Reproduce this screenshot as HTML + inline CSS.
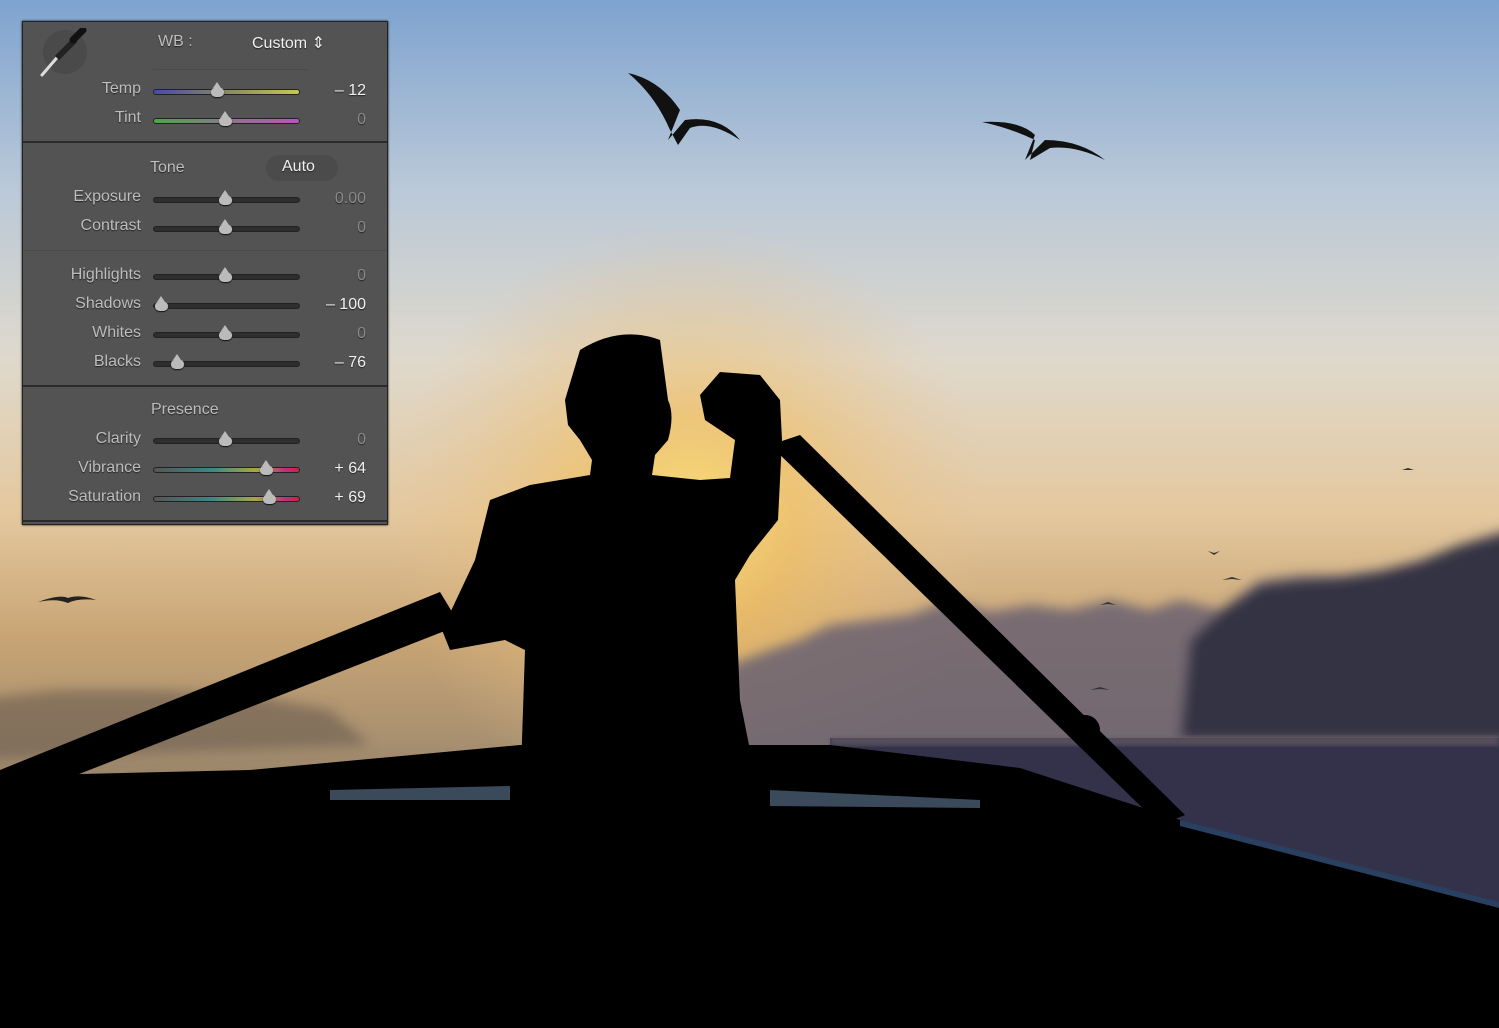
<!DOCTYPE html>
<html><head><meta charset="utf-8"><style>
body{margin:0;width:1499px;height:1028px;overflow:hidden;position:relative;font-family:"Liberation Sans",sans-serif;background:#000}
svg.bg{position:absolute;left:0;top:0}
.panel{position:absolute;left:22px;top:21px;width:364px;height:502px;background:#535353;border:1px solid #222;box-shadow:0 0 2px #000}
.t{position:absolute;color:#bdbdbd;font-size:16px;text-shadow:0 1px 1px #222}
.l{right:246px;text-align:right}
.v{right:21px;text-align:right}
.w{color:#f0f0f0}
.d{color:#8a8a8a}
.trk{position:absolute;left:130px;width:145px;height:4px;border-radius:3px;border:1px solid #222;background:#6a6a6a}
.th{position:absolute;width:13px;height:10px;background:#bbb;border-radius:50% 50% 40% 40%;box-shadow:0 1px 1px #111}
.th:before{content:"";position:absolute;left:2px;top:-5px;border-left:4.5px solid transparent;border-right:4.5px solid transparent;border-bottom:6px solid #bbb}
.sep{position:absolute;left:0;width:364px;height:2px;background:#2a2a2a}
.sep2{position:absolute;left:0;width:364px;height:1px;background:#4a4a4a}
</style></head><body>
<svg class="bg" width="1499" height="1028" viewBox="0 0 1499 1028">
<defs>
<linearGradient id="sky" x1="0" y1="0" x2="0" y2="1">
<stop offset="0" stop-color="#7ea3cf"/><stop offset="0.18" stop-color="#b9c8d8"/><stop offset="0.35" stop-color="#dfd9cc"/><stop offset="0.5" stop-color="#e4c89e"/><stop offset="0.62" stop-color="#c8a474"/><stop offset="0.72" stop-color="#a89070"/><stop offset="1" stop-color="#403a40"/>
</linearGradient>
<radialGradient id="sun" cx="690" cy="520" r="300" gradientUnits="userSpaceOnUse">
<stop offset="0" stop-color="#fbe07a" stop-opacity="1"/><stop offset="0.35" stop-color="#f2c060" stop-opacity=".7"/><stop offset="1" stop-color="#e8c090" stop-opacity="0"/>
</radialGradient>
<filter id="bl" filterUnits="userSpaceOnUse" x="-50" y="0" width="1600" height="1028"><feGaussianBlur stdDeviation="6"/></filter>
<filter id="bl2"><feGaussianBlur stdDeviation="2"/></filter>
</defs>
<rect width="1499" height="1028" fill="url(#sky)"/>
<rect width="1499" height="1028" fill="url(#sun)"/>
<g filter="url(#bl)">
<path d="M730 665 L770 650 L800 640 L830 625 L870 620 L910 615 L950 600 L990 612 L1030 605 L1070 610 L1110 600 L1150 610 L1180 600 L1220 610 L1260 580 L1300 575 L1340 575 L1380 570 L1420 560 L1460 545 L1520 525 L1520 760 L730 760Z" fill="#6a6072" opacity=".85"/>
<path d="M1190 640 L1220 612 L1260 585 L1300 580 L1340 578 L1380 572 L1420 562 L1460 545 L1520 530 L1520 740 L1180 740Z" fill="#2e2c40" opacity=".9"/>
<path d="M-30 700 L60 690 L150 690 L250 695 L330 710 L370 745 L-30 760Z" fill="#6a5a50" opacity=".6"/>
</g>
<rect x="830" y="738" width="669" height="170" fill="#33324a"/>
<rect x="830" y="736" width="669" height="10" fill="#6a6068" opacity=".6" filter="url(#bl2)"/>
<path d="M0 790 L40 775 L250 770 L520 745 L830 745 L1020 768 L1180 820 L1499 905 L1499 1028 L0 1028Z" fill="#000"/>
<path d="M1180 820 L1499 902 L1499 908 L1180 826Z" fill="#2a4060"/>
<path d="M330 790 L510 786 L510 800 L330 800Z M770 790 L980 800 L980 808 L770 806Z" fill="#3a4a5a"/>
<path d="M0 770 L440 592 L460 625 L0 805Z" fill="#000"/>
<path d="M770 445 L800 435 L1185 815 L1160 825Z" fill="#000"/>
<circle cx="1085" cy="730" r="12" fill="none" stroke="#000" stroke-width="6"/>
<path d="M580 350 Q620 325 660 340 L668 400 Q675 415 668 440 L655 455 L652 475 L700 480 L730 478 L735 440 L705 420 L700 395 L720 372 L760 375 L780 400 L782 440 L778 520 L750 555 L735 580 L740 700 L760 800 L520 800 L525 650 L505 640 L450 650 L442 630 L475 560 L490 500 L530 485 L590 475 L592 460 L580 440 L568 425 L565 400 Z" fill="#000"/>
<path d="M628 73 Q660 80 680 110 L668 140 L685 120 Q720 115 740 140 Q710 120 690 128 L678 145 L670 130 Q655 95 628 73Z" fill="#111"/>
<path d="M982 122 Q1020 120 1035 135 L1025 160 L1045 140 Q1080 140 1105 160 Q1075 145 1050 148 L1030 160 L1035 140 Q1010 128 982 122Z" fill="#111"/>
<path d="M38 602 Q60 594 68 598 Q80 594 96 600 Q78 598 68 603 Q56 598 38 602Z" fill="#222"/>
<g fill="#333"><path d="M1208 551 l6 4 l6 -4 l-6 2z"/><path d="M1222 580 l10 -3 l10 3 l-10 -1z"/><path d="M1100 605 l8 -3 l8 3 l-8 -1z"/><path d="M1090 690 l10 -3 l10 3 l-10 -1z"/><path d="M1402 470 l6 -2 l6 2 l-6 0z"/></g>
</svg>
<div class="panel">
<svg style="position:absolute;left:14px;top:6px" width="56" height="50"><circle cx="28" cy="24" r="22" fill="#4a4a4a"/><path d="M5 47 L30 18" stroke="#ddd" stroke-width="3" stroke-linecap="round"/><path d="M20 30 L38 12" stroke="#222" stroke-width="6"/><path d="M36 12 L46 2" stroke="#111" stroke-width="7" stroke-linecap="round"/></svg>
<div class="t" style="left:135px;top:11px">WB :</div>
<div class="t w" style="left:229px;top:11px">Custom ⇕</div>
<div style="position:absolute;left:130px;top:47px;width:155px;height:1px;background:#4a4a4a"></div>
<div class="t l" style="top:58px">Temp</div>
<div class="trk" style="top:67px;background:linear-gradient(90deg,#4848b8,#888860 50%,#c8c850)"></div>
<div class="t v w" style="top:60px">– 12</div>
<div class="t l" style="top:87px">Tint</div>
<div class="trk" style="top:96px;background:linear-gradient(90deg,#48a848,#887888 50%,#c050c0)"></div>
<div class="t v d" style="top:89px">0</div>
<div class="sep" style="top:119px"></div>
<div class="t" style="left:127px;top:137px">Tone</div>
<div style="position:absolute;left:243px;top:133px;width:72px;height:26px;border-radius:13px;background:#4b4b4b"></div>
<div class="t w" style="left:259px;top:136px">Auto</div>
<div class="t l" style="top:166px">Exposure</div>
<div class="trk" style="top:175px;background:#2e2e2e"></div>
<div class="t v d" style="top:168px">0.00</div>
<div class="t l" style="top:195px">Contrast</div>
<div class="trk" style="top:204px;background:#2e2e2e"></div>
<div class="t v d" style="top:197px">0</div>
<div class="sep2" style="top:228px"></div>
<div class="t l" style="top:244px">Highlights</div>
<div class="trk" style="top:252px;background:#2e2e2e"></div>
<div class="t v d" style="top:245px">0</div>
<div class="t l" style="top:273px">Shadows</div>
<div class="trk" style="top:281px;background:#2e2e2e"></div>
<div class="t v w" style="top:274px">– 100</div>
<div class="t l" style="top:302px">Whites</div>
<div class="trk" style="top:310px;background:#2e2e2e"></div>
<div class="t v d" style="top:303px">0</div>
<div class="t l" style="top:331px">Blacks</div>
<div class="trk" style="top:339px;background:#2e2e2e"></div>
<div class="t v w" style="top:332px">– 76</div>
<div class="sep" style="top:363px"></div>
<div class="t" style="left:128px;top:379px">Presence</div>
<div class="t l" style="top:408px">Clarity</div>
<div class="trk" style="top:416px;background:#2e2e2e"></div>
<div class="t v d" style="top:409px">0</div>
<div class="t l" style="top:437px">Vibrance</div>
<div class="trk" style="top:445px;background:linear-gradient(90deg,#555,#3a8888 40%,#a8a840 70%,#c03080 90%,#d02040)"></div>
<div class="t v w" style="top:438px">+ 64</div>
<div class="t l" style="top:466px">Saturation</div>
<div class="trk" style="top:474px;background:linear-gradient(90deg,#555,#3a8888 40%,#a8a840 70%,#c03080 90%,#d02040)"></div>
<div class="t v w" style="top:467px">+ 69</div>
<div class="sep" style="top:498px"></div>
<div class="th" style="left:188px;top:65px"></div>
<div class="th" style="left:196px;top:94px"></div>
<div class="th" style="left:196px;top:173px"></div>
<div class="th" style="left:196px;top:202px"></div>
<div class="th" style="left:196px;top:250px"></div>
<div class="th" style="left:132px;top:279px"></div>
<div class="th" style="left:196px;top:308px"></div>
<div class="th" style="left:148px;top:337px"></div>
<div class="th" style="left:196px;top:414px"></div>
<div class="th" style="left:237px;top:443px"></div>
<div class="th" style="left:240px;top:472px"></div>
</div>
</body></html>
